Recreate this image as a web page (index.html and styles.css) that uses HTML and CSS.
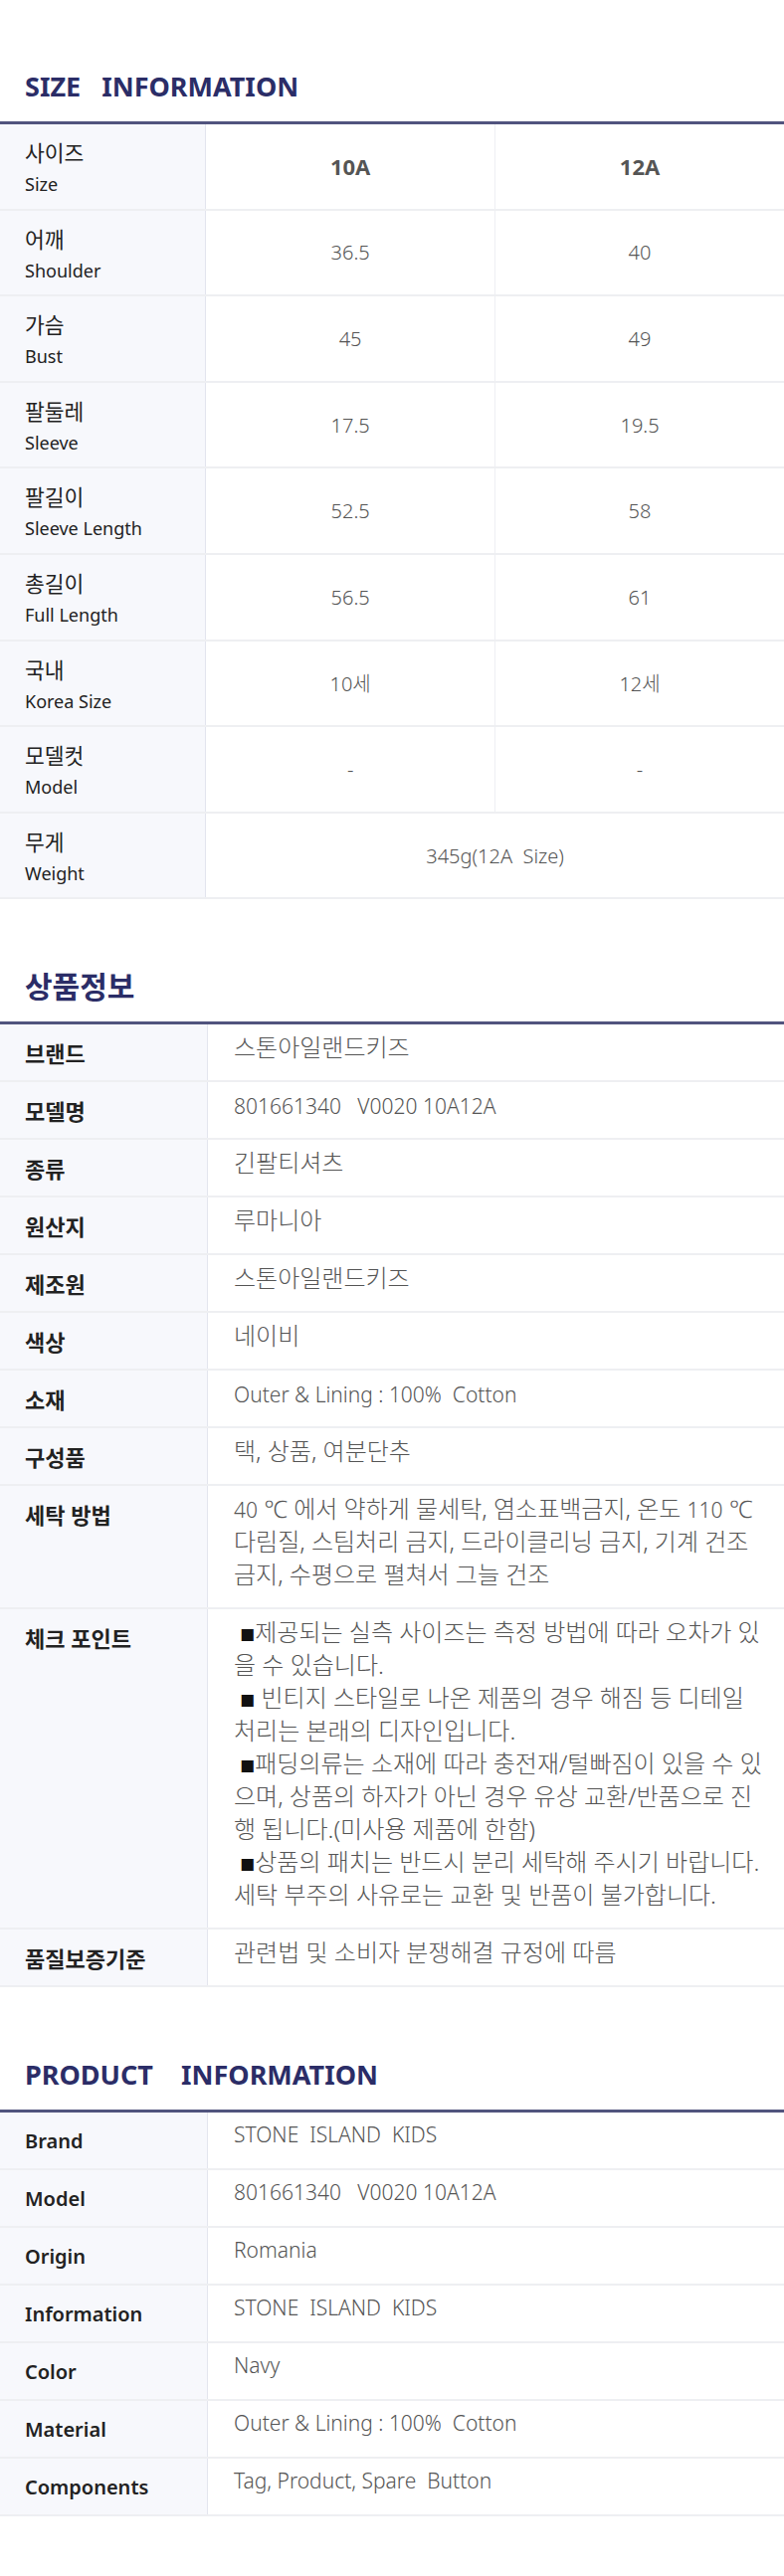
FILE: index.html
```html
<!DOCTYPE html>
<html>
<head>
  <title>Size / Product Information</title>
  <link rel="stylesheet" href="styles.css">
</head>
<body>

  <div class="section size-section">
    <h2 class="section-title">SIZE&nbsp;&nbsp; INFORMATION</h2>
    <table class="size-table">
      <tr>
        <th>사이즈<br><span class="en">Size</span></th>
        <td class="head">10A</td>
        <td class="head">12A</td>
      </tr>
      <tr>
        <th>어깨<br><span class="en">Shoulder</span></th>
        <td>36.5</td>
        <td>40</td>
      </tr>
      <tr>
        <th>가슴<br><span class="en">Bust</span></th>
        <td>45</td>
        <td>49</td>
      </tr>
      <tr>
        <th>팔둘레<br><span class="en">Sleeve</span></th>
        <td>17.5</td>
        <td>19.5</td>
      </tr>
      <tr>
        <th>팔길이<br><span class="en">Sleeve Length</span></th>
        <td>52.5</td>
        <td>58</td>
      </tr>
      <tr>
        <th>총길이<br><span class="en">Full Length</span></th>
        <td>56.5</td>
        <td>61</td>
      </tr>
      <tr>
        <th>국내<br><span class="en">Korea Size</span></th>
        <td>10세</td>
        <td>12세</td>
      </tr>
      <tr>
        <th>모델컷<br><span class="en">Model</span></th>
        <td>-</td>
        <td>-</td>
      </tr>
      <tr>
        <th>무게<br><span class="en">Weight</span></th>
        <td colspan="2">345g(12A&nbsp; Size)</td>
      </tr>
    </table>
  </div>

  <div class="section">
    <h2 class="section-title ko-title">상품정보</h2>
    <table class="info-table ko-table">
      <tr><th>브랜드</th><td>스톤아일랜드키즈</td></tr>
      <tr><th>모델명</th><td><span class="en">801661340&nbsp;&nbsp; V0020 10A12A</span></td></tr>
      <tr><th>종류</th><td>긴팔티셔츠</td></tr>
      <tr><th>원산지</th><td>루마니아</td></tr>
      <tr><th>제조원</th><td>스톤아일랜드키즈</td></tr>
      <tr><th>색상</th><td>네이비</td></tr>
      <tr><th>소재</th><td><span class="en">Outer &amp; Lining : 100%&nbsp; Cotton</span></td></tr>
      <tr><th>구성품</th><td>택, 상품, 여분단추</td></tr>
      <tr>
        <th>세탁 방법</th>
        <td><span class="en">40</span> ℃ 에서 약하게 물세탁, 염소표백금지, 온도 <span class="en">110</span> ℃<br>다림질, 스팀처리 금지, 드라이클리닝 금지, 기계 건조<br>금지, 수평으로 펼쳐서 그늘 건조</td>
      </tr>
      <tr>
        <th>체크 포인트</th>
        <td>&nbsp;<span class="mark">■</span>제공되는 실측 사이즈는 측정 방법에 따라 오차가 있<br>을 수 있습니다.<br>&nbsp;<span class="mark">■</span> 빈티지 스타일로 나온 제품의 경우 해짐 등 디테일<br>처리는 본래의 디자인입니다.<br>&nbsp;<span class="mark">■</span>패딩의류는 소재에 따라 충전재/털빠짐이 있을 수 있<br>으며, 상품의 하자가 아닌 경우 유상 교환/반품으로 진<br>행 됩니다.(미사용 제품에 한함)<br>&nbsp;<span class="mark">■</span>상품의 패치는 반드시 분리 세탁해 주시기 바랍니다.<br>세탁 부주의 사유로는 교환 및 반품이 불가합니다.</td>
      </tr>
      <tr><th>품질보증기준</th><td>관련법 및 소비자 분쟁해결 규정에 따름</td></tr>
    </table>
  </div>

  <div class="section">
    <h2 class="section-title">PRODUCT&nbsp;&nbsp;&nbsp; INFORMATION</h2>
    <table class="info-table en-table">
      <tr><th>Brand</th><td>STONE&nbsp; ISLAND&nbsp; KIDS</td></tr>
      <tr><th>Model</th><td>801661340&nbsp;&nbsp; V0020 10A12A</td></tr>
      <tr><th>Origin</th><td>Romania</td></tr>
      <tr><th>Information</th><td>STONE&nbsp; ISLAND&nbsp; KIDS</td></tr>
      <tr><th>Color</th><td>Navy</td></tr>
      <tr><th>Material</th><td>Outer &amp; Lining : 100%&nbsp; Cotton</td></tr>
      <tr><th>Components</th><td>Tag, Product, Spare&nbsp; Button</td></tr>
    </table>
  </div>

</body>
</html>
```

FILE: styles.css
```css
:root {
  --navy: #2b2d67;
  --line: #eeeff2;
  --label-bg: #f7f8fc;
}

body {
  margin: 0;
  width: 788px;
  font-family: "Noto Sans", "Noto Sans CJK KR", sans-serif;
  background-color: #fff;
  color: #222;
}

.section {
  padding-top: 68px;
}

.size-section {
  padding-top: 67px;
}

.section-title {
  margin: 0 0 15px;
  padding-left: 25px;
  font-size: 27px;
  line-height: 40px;
  font-weight: bold;
  color: var(--navy);
}

.ko-title {
  font-size: 30px;
}

table {
  width: 100%;
  border-collapse: collapse;
  border-top: 3px solid #51547e;
}

th {
  text-align: left;
  vertical-align: top;
  background-color: var(--label-bg);
  border-right: 1px solid #e3e5ee;
  border-bottom: 2px solid var(--line);
  padding: 14px 10px 0 25px;
  line-height: 30px;
  font-size: 20px;
  font-weight: 500;
  color: #222;
}

td {
  border-bottom: 2px solid var(--line);
  color: #555;
  font-weight: 300;
}

/* size table */
.size-table th {
  width: 172px;
  height: 70.6px;
  font-size: 21.5px;
  font-weight: 400;
}

.size-table .en {
  font-size: 18px;
  line-height: 20px;
}

.size-table td {
  width: 290px;
  text-align: center;
  vertical-align: middle;
  border-right: 1px solid #eeeff3;
  font-size: 20px;
}

.size-table td:last-child {
  border-right: none;
}

.size-table td.head {
  font-size: 22px;
  font-weight: bold;
}

/* info tables */
.info-table th {
  width: 173px;
  font-weight: 600;
}

.ko-table th {
  font-size: 22px;
}

.info-table td {
  vertical-align: top;
  padding: 6px 16px 17px 26px;
  font-size: 24px;
  line-height: 33px;
}

.info-table .en,
.en-table td {
  font-size: 21px;
}

.info-table .en {
  line-height: 20px;
}

.mark {
  font-family: "Noto Sans CJK KR", sans-serif;
  font-size: 15px;
  line-height: 15px;
  color: #111;
}
```
